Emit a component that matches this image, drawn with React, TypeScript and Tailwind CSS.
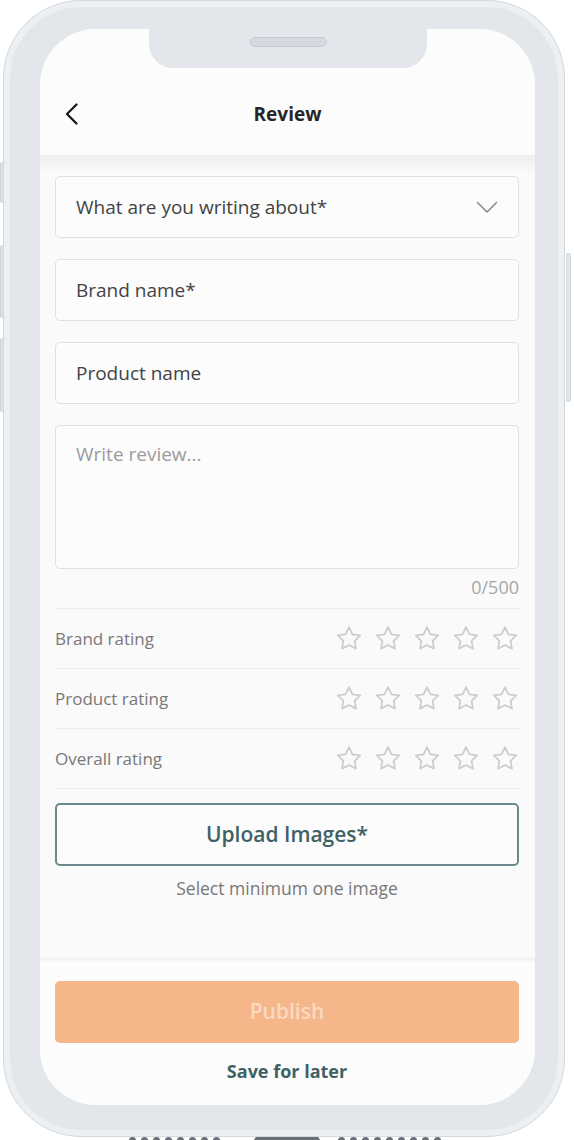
const labels = ["Brand rating", "Product rating", "Overall rating"];

function StarIcon() {
  return (
    <svg width="28" height="27" viewBox="0 0 24 24" fill="none" stroke="#cdcdcd" strokeWidth="1.6" strokeLinejoin="round">
      <polygon points="12,2 15.09,8.26 22,9.27 17,14.14 18.18,21.02 12,17.77 5.82,21.02 7,14.14 2,9.27 8.91,8.26" />
    </svg>
  );
}

function Field({ children }: { children: React.ReactNode }) {
  return (
    <div className="h-[62px] mt-[21px] first:mt-0 flex items-center px-[20px] border border-[#e0e0e0] rounded-[5px] bg-[#fcfcfc] text-[19px] text-[#434343]">
      {children}
    </div>
  );
}

export default function App() {
  return (
    <div className="relative w-[574px] h-[1140px] overflow-hidden bg-white font-['Open_Sans',sans-serif]">
      {/* side buttons */}
      <div className="absolute left-0 top-[162px] w-[5px] h-[41px] rounded-l-[2px] bg-[#dce1e6] border border-[#cfd5dc]" />
      <div className="absolute left-0 top-[245px] w-[5px] h-[73px] rounded-l-[2px] bg-[#dce1e6] border border-[#cfd5dc]" />
      <div className="absolute left-0 top-[338px] w-[5px] h-[74px] rounded-l-[2px] bg-[#dce1e6] border border-[#cfd5dc]" />
      <div className="absolute left-[566px] top-[253px] w-[5px] h-[149px] rounded-r-[2px] bg-[#e3e7eb] border border-[#d3d9df]" />

      {/* bottom speaker / port */}
      <div className="absolute top-[1137px] left-[129px] flex gap-[5px]">
        {Array.from({ length: 8 }).map((_, i) => (
          <div key={i} className="w-[7px] h-[8px] rounded-full bg-[#6a7077]" />
        ))}
      </div>
      <div className="absolute top-[1136px] left-[254px] w-[66px] h-[10px] rounded-full bg-[#6a7077]" />
      <div className="absolute top-[1137px] left-[338px] flex gap-[5px]">
        {Array.from({ length: 9 }).map((_, i) => (
          <div key={i} className="w-[7px] h-[8px] rounded-full bg-[#6a7077]" />
        ))}
      </div>

      {/* phone body */}
      <div className="relative ml-[3px] w-[562px] h-[1137px] rounded-[78px] bg-[#e3e7eb] border border-[#d3d9df] shadow-[inset_0_0_0_6px_#edf0f3] pt-[28px] pl-[36px] pr-[29px] pb-[31px] flex">
        <div className="relative flex-1 flex flex-col rounded-[56px] overflow-hidden bg-[#fafafa]">
          {/* notch */}
          <div className="absolute left-[109px] top-0 w-[278px] h-[39px] rounded-b-[24px] bg-[#e3e7eb] flex justify-center">
            <div className="mt-[8px] w-[77px] h-[10px] rounded-full bg-[#d5dae0] border border-[#c6ccd3]" />
          </div>

          {/* header */}
          <div className="h-[126px] pt-[70px] px-[25px] bg-[#fcfcfc] shrink-0">
            <div className="h-[30px] flex items-center justify-between">
              <svg width="13" height="22" viewBox="0 0 13 22" fill="none" stroke="#141414" strokeWidth="2.2" strokeLinecap="round" strokeLinejoin="round">
                <polyline points="11.5,1.5 2,11 11.5,20.5" />
              </svg>
              <span className="text-[19px] font-bold text-[#262626]">Review</span>
              <div className="w-[13px]" />
            </div>
          </div>
          <div className="h-[17px] shrink-0 bg-gradient-to-b from-[#eeeeee] to-[#fafafa]" />

          {/* form */}
          <div className="flex-1 flex flex-col pt-[4px] pl-[15px] pr-[16px]">
            <Field>
              <span className="flex-1">What are you writing about*</span>
              <svg width="22" height="13" viewBox="0 0 22 13" fill="none" stroke="#8c8c8c" strokeWidth="1.6" strokeLinecap="round" strokeLinejoin="round">
                <polyline points="1.5,1.5 11,11 20.5,1.5" />
              </svg>
            </Field>
            <Field>Brand name*</Field>
            <Field>Product name</Field>
            <div className="h-[144px] mt-[21px] px-[20px] pt-[16px] border border-[#e0e0e0] rounded-[5px] bg-[#fcfcfc] text-[19px] leading-[24px] text-[#9b9b9b]">
              Write review...
            </div>
            <div className="mt-[8px] text-right text-[18px] leading-[20px] text-[#a6a6a6]">0/500</div>

            <div className="mt-[11px] border-b border-[#ebebeb]">
              {labels.map((l) => (
                <div key={l} className="h-[60px] border-t border-[#ebebeb] flex items-center justify-between">
                  <span className="text-[17px] text-[#787878]">{l}</span>
                  <div className="flex gap-[11px]">
                    <StarIcon />
                    <StarIcon />
                    <StarIcon />
                    <StarIcon />
                    <StarIcon />
                  </div>
                </div>
              ))}
            </div>

            <div className="mt-[14px] h-[63px] flex items-center justify-center border-2 border-[#6a898e] rounded-[5px] bg-[#fcfcfc] text-[21px] font-semibold text-[#3f6166]">
              Upload Images*
            </div>
            <div className="mt-[12px] text-center text-[17.5px] leading-[20px] text-[#787878]">Select minimum one image</div>
          </div>

          {/* bottom */}
          <div className="shrink-0 h-[147px] bg-[#fcfcfc]">
            <div className="h-[4px] bg-gradient-to-b from-[#ededed] to-[#fcfcfc]" />
            <div className="pt-[19px] pl-[15px] pr-[16px]">
              <div className="h-[62px] rounded-[5px] bg-[#f5b68a] flex items-center justify-center text-[21px] font-semibold text-[#fbd9c1]">
                Publish
              </div>
              <div className="mt-[16px] text-center text-[18px] leading-[24px] font-bold text-[#3f6166]">Save for later</div>
            </div>
          </div>
        </div>
      </div>
    </div>
  );
}
